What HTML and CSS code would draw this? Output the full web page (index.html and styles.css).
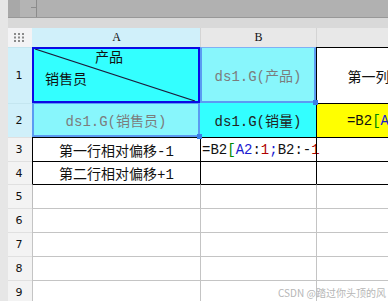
FILE: index.html
```html
<!DOCTYPE html>
<html>
<head>
<meta charset="utf-8">
<link rel="stylesheet" href="styles.css">
</head>
<body>
<div class="app">
  <div class="strip"></div>
  <div class="main">
    <div class="toolbar">
      <div class="tb-a"></div>
      <div class="tb-b"><span class="dash"></span></div>
      <div class="tb-c"></div>
    </div>
    <div class="band"></div>
    <div class="sheet">
      <div class="corner">
        <svg width="10" height="9" viewBox="0 0 10 9">
          <g fill="#8a8a8a">
            <rect x="0" y="0" width="2" height="2"/><rect x="4" y="0" width="2" height="2"/><rect x="8" y="0" width="2" height="2"/>
            <rect x="0" y="3.5" width="2" height="2"/><rect x="4" y="3.5" width="2" height="2"/><rect x="8" y="3.5" width="2" height="2"/>
            <rect x="0" y="7" width="2" height="2"/><rect x="4" y="7" width="2" height="2"/><rect x="8" y="7" width="2" height="2"/>
          </g>
        </svg>
      </div>
      <div class="colhead sel">A</div>
      <div class="colhead">B</div>
      <div class="colhead last">C</div>

      <div class="rowhead sel">1</div>
      <div class="cell a1">
        <svg class="diag" width="164" height="52" viewBox="0 0 164 52"><line x1="1" y1="0" x2="161" y2="52" stroke="#1c1c3c" stroke-width="1.2"/></svg>
        <div class="a1-top">产品</div>
        <div class="a1-bottom">销售员</div>
      </div>
      <div class="cell b1 ds">ds1.G(产品)<span class="handle h1"></span></div>
      <div class="cell c1">第一列相对偏移-1</div>

      <div class="rowhead sel">2</div>
      <div class="cell a2 ds">ds1.G(销售员)<span class="handle h2"></span></div>
      <div class="cell b2">ds1.G(销量)</div>
      <div class="cell c2"><span>=B2</span><span class="g">[</span><span class="b">A2</span>:<span class="r">-1</span>;B2:1]</div>

      <div class="rowhead">3</div>
      <div class="cell k ctr">第一行相对偏移-1</div>
      <div class="cell k left">=B2<span class="g">[</span><span class="b">A2</span>:<span class="r">1</span><span class="b">;</span>B2:-<span class="r">1</span></div>
      <div class="cell k"></div>

      <div class="rowhead">4</div>
      <div class="cell k ctr">第二行相对偏移+1</div>
      <div class="cell k"></div>
      <div class="cell k"></div>

      <div class="rowhead">5</div>
      <div class="cell g5"></div><div class="cell g5"></div><div class="cell g5"></div>
      <div class="rowhead">6</div>
      <div class="cell e"></div><div class="cell e"></div><div class="cell e"></div>
      <div class="rowhead">7</div>
      <div class="cell e"></div><div class="cell e"></div><div class="cell e"></div>
      <div class="rowhead">8</div>
      <div class="cell e"></div><div class="cell e"></div><div class="cell e"></div>
      <div class="rowhead">9</div>
      <div class="cell e"></div><div class="cell e"></div><div class="cell e"></div>
    </div>
  </div>
  <div class="watermark">CSDN @踏过你头顶的风</div>
</div>
</body>
</html>
```
FILE: styles.css
```css
* { box-sizing: border-box; }
html, body { margin: 0; padding: 0; }
body {
  width: 388px; height: 301px; overflow: hidden; background: #fff;
  font-family: "Liberation Mono", "Noto Sans CJK SC", monospace;
}
.app { position: relative; display: flex; width: 388px; height: 301px; overflow: hidden; }
.strip { width: 8px; flex: none; background: #e6e6e6; }
.main { flex: 1; display: flex; flex-direction: column; min-width: 0; }
.toolbar { height: 18px; display: flex; background: #b1b1b1; border-bottom: 1px solid #989898; flex: none; }
.tb-a { width: 12px; background: #a8a8a8; }
.tb-b { width: 17px; background: #b4b4b4; border-right: 1px solid #8c8c8c; position: relative; }
.dash { position: absolute; right: 0; top: 7px; width: 5px; height: 1px; background: #8c8c8c; }
.tb-c { flex: 1; }
.band { height: 10px; background: #d9d9d9; flex: none; }
.sheet {
  display: grid;
  grid-template-columns: 24px 168px 116px 177px;
  grid-template-rows: 19px 56px 34px 24px 23px 24px 24px 24px 24px 24px;
}
.corner { background: #f3f3f5; display: flex; align-items: center; justify-content: center; padding-right: 2px; }
.colhead {
  background: #e8e8e8; border-left: 1px solid #d4d4d4;
  display: flex; align-items: center; justify-content: center;
  font-family: "Liberation Serif", serif; font-size: 12px; color: #111;
}
.colhead.sel { background: #d0f0fa; border-left: 1px solid #d0f0fa; }
.rowhead {
  background: #f3f3f3; border-top: 1px solid #e0e0e0;
  display: flex; align-items: center; justify-content: center;
  font-family: "DejaVu Sans", sans-serif; font-size: 11px; color: #111; padding-right: 2px;
}
.rowhead.sel { background: #d0f0fa; border-top: 1px solid #c4e6f0; }
.cell {
  position: relative; font-size: 14px; color: #111; white-space: nowrap; overflow: visible;
  display: flex; align-items: center; justify-content: center;
}
.a1 {
  background: #33ffff; border: 2px solid #0a0ae6; display: block;
  font-family: "Noto Sans CJK SC", sans-serif; font-size: 14px; line-height: 16px;
}
.diag { position: absolute; left: 0; top: 0; }
.a1-top { padding-left: 61px; margin-top: -1px; }
.a1-bottom { padding-left: 11px; margin-top: 6px; }
.ds { color: #7c7c7c; background: #88f6fc; }
.b1 { border: 2px solid #5b9bf2; border-top: 1px solid #7fb0f5; padding-top: 1px; }
.a2 { border: 2px solid #5b9bf2; border-top: 1px solid #5b9bf2; }
.handle { position: absolute; width: 5px; height: 5px; background: #3a7ee8; z-index: 3; }
.h1 { right: -4px; bottom: -4px; }
.h2 { right: -4px; bottom: -4px; }
.c1 { border-top: 1px solid #000; border-left: 1px solid #000; background: #fff; }
.b2 { background: #33ffff; color: #222; }
.c2 { background: #ffff00; border-top: 1px solid #000; border-left: 1px solid #000; color: #111; padding-left: 10px; }
.g { color: #008a00; }
.b { color: #1a1ad0; }
.r { color: #b00000; }
.k { border-top: 1px solid #000; border-left: 1px solid #000; }
.left { justify-content: flex-start; padding-left: 1px; }
.g5 { border-top: 1px solid #000; border-left: 1px solid #bdbdbd; }
.e { border-top: 1px solid #c4c4c4; border-left: 1px solid #c4c4c4; }
.watermark {
  position: absolute; left: 278px; top: 285px;
  font-family: "Noto Sans CJK SC", sans-serif; font-size: 10px; color: #b6b6b6;
}
```
